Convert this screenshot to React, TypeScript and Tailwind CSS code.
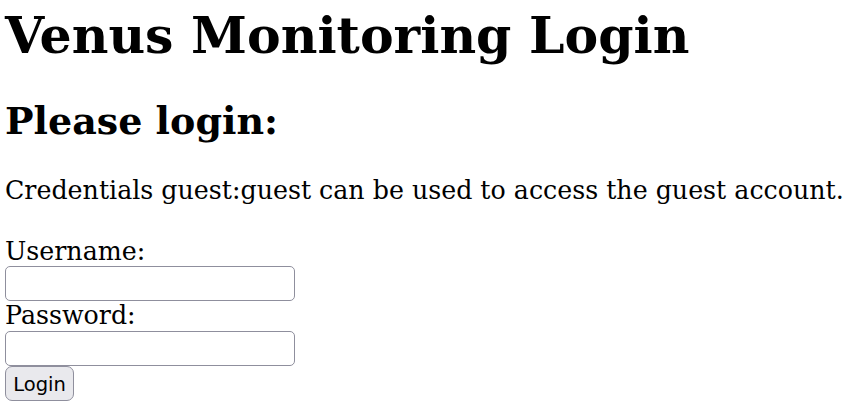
export default function App() {
  return (
    <div className="bg-white pl-[5px] pt-[6px] font-['DejaVu_Serif',serif] text-[25.3px] leading-[29.5px] text-black">
      <h1 className="whitespace-nowrap text-[50.5px] font-bold leading-[59px]">Venus Monitoring Login</h1>
      <h2 className="mt-[34px] text-[38px] font-bold leading-[44px]">Please login:</h2>
      <p className="mt-[33px] whitespace-nowrap">Credentials guest:guest can be used to access the guest account.</p>
      <form className="mt-[31px] flex flex-col items-start">
        <label>Username:</label>
        <input
          type="text"
          className="h-[35px] w-[290px] rounded-[5px] border border-[#8f8f9d] bg-white"
        />
        <label className="leading-[30px]">Password:</label>
        <input
          type="password"
          className="h-[35px] w-[290px] rounded-[5px] border border-[#8f8f9d] bg-white"
        />
        <button
          type="submit"
          className="h-[35px] w-[69px] rounded-[7px] border border-[#8f8f9d] bg-[#e9e9ed] pt-[2px] font-['DejaVu_Sans',sans-serif] text-[19.5px] leading-[25px]"
        >
          Login
        </button>
      </form>
    </div>
  );
}
